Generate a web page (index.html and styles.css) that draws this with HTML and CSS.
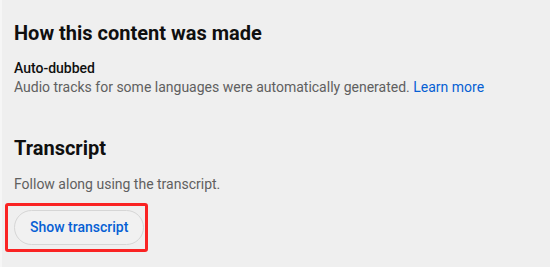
FILE: index.html
```html
<!DOCTYPE html>
<html lang="en">
<head>
<meta charset="utf-8">
<title>How this content was made</title>
<link rel="stylesheet" href="styles.css">
</head>
<body>
<main class="panel">
  <section class="block">
    <h2 class="title">How this content was made</h2>
    <div class="label">Auto-dubbed</div>
    <p class="desc">Audio tracks for some languages were automatically generated. <a class="link" href="#">Learn more</a></p>
  </section>
  <section class="block transcript">
    <h2 class="title">Transcript</h2>
    <p class="desc">Follow along using the transcript.</p>
    <div class="highlight">
      <button class="pill" type="button">Show transcript</button>
    </div>
  </section>
</main>
</body>
</html>
```

FILE: styles.css
```css
html, body {
  margin: 0;
  padding: 0;
  height: 100%;
}
body {
  background: #efefef;
  font-family: Roboto, "Liberation Sans", sans-serif;
  color: #0f0f0f;
}
.panel {
  border-left: 2px solid #f6f6f6;
  padding: 19px 0 0 12px;
  min-height: 100%;
  box-sizing: border-box;
}
.block {
  display: flex;
  flex-direction: column;
  align-items: flex-start;
}
.title {
  margin: 0;
  font-size: 20px;
  line-height: 28px;
  font-weight: 700;
  color: #0f0f0f;
}
.label {
  margin-top: 12px;
  font-size: 14px;
  line-height: 18px;
  font-weight: 500;
  color: #0f0f0f;
}
.desc {
  margin: 0;
  font-size: 14px;
  line-height: 20px;
  color: #606060;
}
.link {
  color: #065fd4;
  text-decoration: none;
}
.transcript {
  margin-top: 37px;
}
.transcript .desc {
  margin-top: 12px;
}
.highlight {
  margin-top: 9px;
  margin-left: -9px;
  border: 3px solid #fa2323;
  border-radius: 3px;
  padding: 4px 1px 4px 6px;
}
.pill {
  display: block;
  height: 35px;
  padding: 0 15px;
  border: 1px solid #d6d6d6;
  border-radius: 18px;
  background: #f1f1f1;
  font-family: Roboto, "Liberation Sans", sans-serif;
  font-size: 14px;
  font-weight: 500;
  line-height: 33px;
  color: #065fd4;
  cursor: pointer;
}
```
